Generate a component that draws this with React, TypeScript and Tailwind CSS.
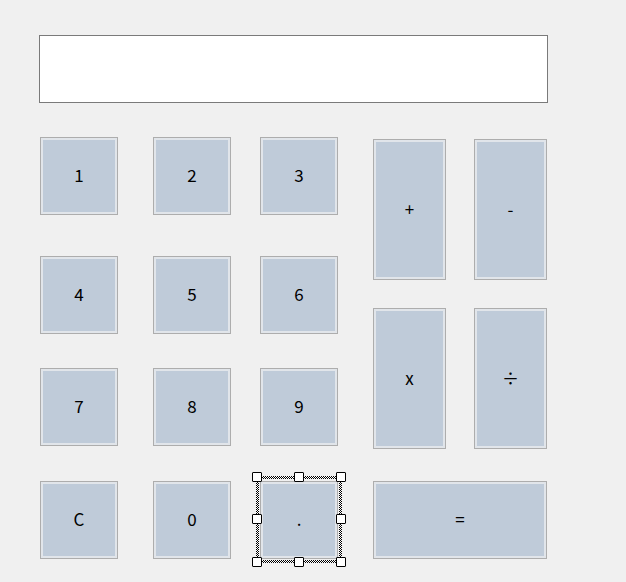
import React from "react";

const font = { fontFamily: '"Noto Sans CJK SC", "Noto Sans", sans-serif' };

function Btn({ label, className = "" }: { label: string; className?: string }) {
  return (
    <div
      className={
        "flex items-center justify-center border border-[#adadad] bg-[#bfcbd9] shadow-[inset_0_0_0_2px_#e1e5ea] text-[17px] leading-none text-black select-none pb-[3px] " +
        className
      }
    >
      {label}
    </div>
  );
}

function Handle({ className }: { className: string }) {
  return <div className={"absolute w-[10px] h-[10px] bg-white border border-black rounded-[1px] " + className} />;
}

function Selected({ label }: { label: string }) {
  const checker =
    "absolute bg-[repeating-conic-gradient(#000_0_25%,#fff_0_50%)] bg-[length:2px_2px]";
  return (
    <div className="relative w-[78px] h-[78px]">
      <Btn label={label} className="w-[78px] h-[78px]" />
      <div className="absolute left-[-4px] top-[-5px] w-[86px] h-[87px] pointer-events-none">
        <div className={checker + " left-0 top-0 w-[86px] h-[3px]"} />
        <div className={checker + " left-0 bottom-0 w-[86px] h-[3px]"} />
        <div className={checker + " left-0 top-0 w-[3px] h-[87px]"} />
        <div className={checker + " right-0 top-0 w-[3px] h-[87px]"} />
        <Handle className="left-[-4px] top-[-4px]" />
        <Handle className="left-[38px] top-[-4px]" />
        <Handle className="left-[80px] top-[-4px]" />
        <Handle className="left-[-4px] top-[38px]" />
        <Handle className="left-[80px] top-[38px]" />
        <Handle className="left-[-4px] top-[81px]" />
        <Handle className="left-[38px] top-[81px]" />
        <Handle className="left-[80px] top-[81px]" />
      </div>
    </div>
  );
}

function NumRow({ labels, className = "" }: { labels: React.ReactNode[]; className?: string }) {
  return (
    <div className={"flex " + className}>
      <div className="w-[78px] h-[78px]">{labels[0]}</div>
      <div className="w-[78px] h-[78px] ml-[35px]">{labels[1]}</div>
      <div className="w-[78px] h-[78px] ml-[29px]">{labels[2]}</div>
    </div>
  );
}

export default function App() {
  const sq = "w-[78px] h-[78px]";
  return (
    <div className="w-[626px] h-[582px] bg-[#f0f0f0] overflow-hidden pt-[35px] pl-[39px]" style={font}>
      <div className="w-[509px] h-[68px] border border-[#7a7a7a] bg-white" />
      <div className="flex items-start mt-[34px]">
        <div className="flex flex-col ml-[1px]">
          <NumRow labels={[<Btn label="1" className={sq} />, <Btn label="2" className={sq} />, <Btn label="3" className={sq} />]} />
          <NumRow className="mt-[41px]" labels={[<Btn label="4" className={sq} />, <Btn label="5" className={sq} />, <Btn label="6" className={sq} />]} />
          <NumRow className="mt-[34px]" labels={[<Btn label="7" className={sq} />, <Btn label="8" className={sq} />, <Btn label="9" className={sq} />]} />
          <NumRow className="mt-[35px]" labels={[<Btn label="C" className={sq} />, <Btn label="0" className={sq} />, <Selected label="." />]} />
        </div>
        <div className="flex flex-col ml-[35px] mt-[2px]">
          <div className="flex gap-[28px]">
            <Btn label="+" className="w-[73px] h-[141px]" />
            <Btn label="-" className="w-[73px] h-[141px]" />
          </div>
          <div className="flex gap-[28px] mt-[28px]">
            <Btn label="x" className="w-[73px] h-[141px]" />
            <Btn label="÷" className="w-[73px] h-[141px]" />
          </div>
          <Btn label="=" className="w-[174px] h-[78px] mt-[32px]" />
        </div>
      </div>
    </div>
  );
}
